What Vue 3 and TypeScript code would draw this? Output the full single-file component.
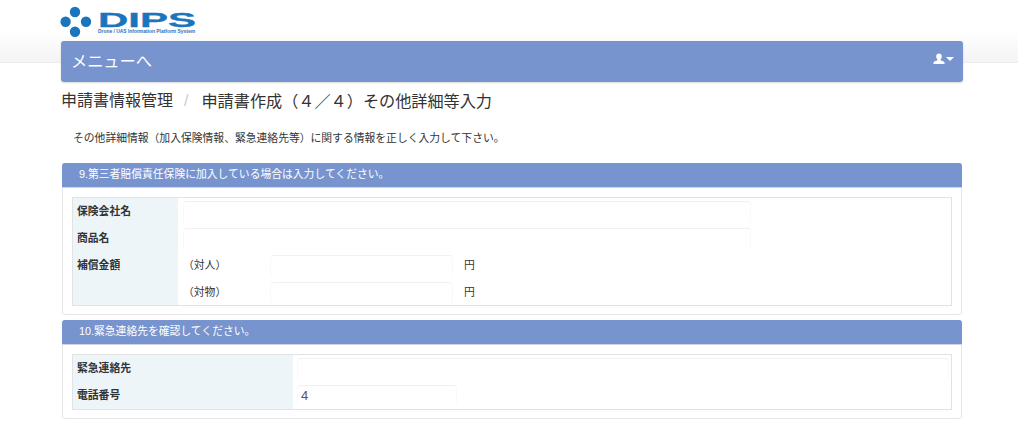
<script setup lang="ts">
import { ref } from 'vue';

const phone = ref('4');
</script>

<template>
  <div class="page">
    <header class="top">
      <svg class="logo" width="140" height="40" viewBox="0 0 140 40" aria-label="DIPS">
        <circle cx="15" cy="12" r="5.2" fill="#1b75bc" />
        <circle cx="5.6" cy="21.8" r="5.2" fill="#1b75bc" />
        <circle cx="26" cy="21.8" r="5.2" fill="#1b75bc" />
        <circle cx="15" cy="31.8" r="5.2" fill="#1b75bc" />
        <text x="38" y="27" class="logo-name" textLength="98" lengthAdjust="spacingAndGlyphs">DIPS</text>
        <text x="38" y="33" class="logo-sub" textLength="97" lengthAdjust="spacingAndGlyphs">Drone / UAS Information Platform System</text>
      </svg>
      <nav class="menu">
        <span class="menu-link">メニューへ</span>
        <span class="user">
          <svg width="12" height="12" viewBox="0 0 12 12">
            <path d="M6 0.5c-1.8 0-2.8 1.3-2.8 3 0 1.2.5 2.2 1.2 2.8v.9c-.9.5-3.600 1-3.900 2.300-.1.5-.1 1.100-.1 1.500h11.200c0-.4 0-1-.1-1.500-.3-1.300-3-1.800-3.900-2.300v-.9c.7-.6 1.200-1.600 1.200-2.800 0-1.700-1-3-2.800-3z" fill="#fff" />
          </svg>
          <i class="caret"></i>
        </span>
      </nav>
    </header>

    <main class="content">
      <h1 class="crumb">
        <span>申請書情報管理</span>
        <span class="sep">/</span>
        <span class="current">申請書作成（４／４）その他詳細等入力</span>
      </h1>
      <p class="lead">その他詳細情報（加入保険情報、緊急連絡先等）に関する情報を正しく入力して下さい。</p>

      <section class="panel first">
        <h2 class="panel-head">9.第三者賠償責任保険に加入している場合は入力してください。</h2>
        <div class="panel-body">
          <div class="form insurance">
            <div class="label">保険会社名</div>
            <div class="field"><input class="wide" type="text" /></div>
            <div class="label">商品名</div>
            <div class="field"><input class="wide" type="text" /></div>
            <div class="label">補償金額</div>
            <div class="field">
              <span class="kind">（対人）</span>
              <input class="amount" type="text" />
              <span class="unit">円</span>
            </div>
            <div class="label"></div>
            <div class="field">
              <span class="kind">（対物）</span>
              <input class="amount" type="text" />
              <span class="unit">円</span>
            </div>
          </div>
        </div>
      </section>

      <section class="panel">
        <h2 class="panel-head">10.緊急連絡先を確認してください。</h2>
        <div class="panel-body">
          <div class="form contact">
            <div class="label">緊急連絡先</div>
            <div class="field"><input class="full" type="text" /></div>
            <div class="label">電話番号</div>
            <div class="field"><input v-model="phone" class="tel" type="text" /></div>
          </div>
        </div>
      </section>
    </main>
  </div>
</template>

<style>
html,
body {
  background: #fff;
}
</style>

<style scoped>
.page {
  width: 1018px;
  height: 423px;
  overflow: hidden;
  font-family: "Liberation Sans", "Noto Sans CJK JP", sans-serif;
  color: #333;
}
.top {
  height: 62px;
  padding-left: 60px;
  border-bottom: 1px solid #ececec;
  background: linear-gradient(#fff 30px, #f4f4f4 62px);
}
.logo {
  display: block;
  margin-bottom: 1px;
}
.logo-name {
  fill: #1b75bc;
  stroke: #1b75bc;
  stroke-width: 0.3px;
  font: 700 19.5px "Liberation Sans", sans-serif;
}
.logo-sub {
  fill: #1b75bc;
  font: 700 4.6px "Liberation Sans", sans-serif;
}
.menu {
  display: flex;
  justify-content: space-between;
  align-items: center;
  box-sizing: border-box;
  width: 902px;
  height: 41px;
  margin-left: 1px;
  padding: 0 9px 0 10px;
  border-radius: 3px;
  background: #7894cf;
  box-shadow: 0 1px 2px rgba(0, 0, 0, 0.15);
  color: #fff;
}
.menu-link {
  margin-top: -3px;
  font-size: 16.2px;
}
.user {
  display: flex;
  align-items: center;
  gap: 1px;
  margin-top: -5px;
}
.caret {
  width: 0;
  height: 0;
  border-top: 4px solid #fff;
  border-left: 4px solid transparent;
  border-right: 4px solid transparent;
}
.content {
  padding: 0 55px 0 61px;
}
.crumb {
  display: flex;
  gap: 10px;
  margin: 27px 0 0;
  font-size: 16px;
  font-weight: 400;
  line-height: 22px;
}
.sep {
  margin: 0 1px;
  color: #ccc;
}
.current {
  margin-left: 2px;
  font-size: 16.15px;
}
.lead {
  margin: 18px 0 0 12px;
  font-size: 10.8px;
  line-height: 17px;
}
.panel {
  box-sizing: border-box;
  width: 900px;
  margin: 5px 0 0 1px;
  border: 1px solid #e8e8e8;
  border-radius: 3px;
}
.first {
  margin-top: 16px;
}
.panel-head {
  margin: -1px -1px 0;
  padding: 0 0 0 17px;
  height: 25px;
  border-radius: 3px 3px 0 0;
  background: #7894cf;
  border-bottom: 1px solid #cfd5e2;
  box-sizing: border-box;
  color: #fff;
  font-size: 10.8px;
  font-weight: 400;
  line-height: 23px;
}
.panel-body {
  padding: 9px 9px 8px;
}
.form {
  display: grid;
  border: 1px solid #e2e2e2;
  background: #fff;
}
.insurance {
  grid-template-columns: 105px 1fr;
}
.contact {
  grid-template-columns: 220px 1fr;
}
.label {
  height: 26.85px;
  padding-left: 4px;
  background: #eef5f9;
  font-size: 10.8px;
  font-weight: 700;
  line-height: 26px;
}
.field {
  display: flex;
  align-items: flex-start;
  height: 26.85px;
  padding: 3px 0 0 5px;
  box-sizing: border-box;
  font-size: 10.8px;
}
.contact .field {
  padding-left: 4px;
}
.kind {
  width: 87px;
  line-height: 21px;
}
.unit {
  margin-left: 11px;
  line-height: 21px;
}
input {
  box-sizing: border-box;
  height: 23px;
  padding: 0 3px;
  border: 1px solid;
  border-color: #f1f1f1 #f9f9f9 #fff;
  border-radius: 4px;
  outline: none;
  background: #fff;
  color: #555;
  font: 13px "Liberation Sans", "Noto Sans CJK JP", sans-serif;
}
.wide {
  width: 568px;
}
.amount {
  width: 183px;
}
.full {
  width: 652px;
}
.tel {
  width: 160px;
  height: 20px;
}
</style>
